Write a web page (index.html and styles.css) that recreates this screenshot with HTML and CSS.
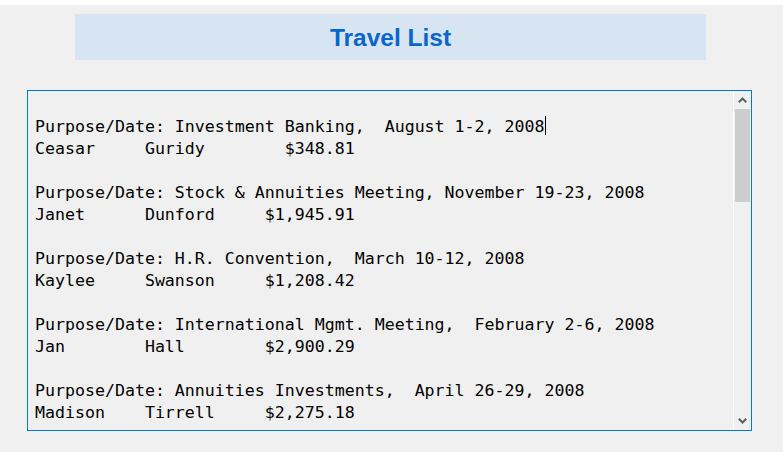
FILE: index.html
```html
<!DOCTYPE html>
<html>
<head>
<meta charset="utf-8">
<link rel="stylesheet" href="styles.css">
</head>
<body>
<div class="topstrip"></div>
<div class="page">
  <div class="banner"><h1 class="title">Travel List</h1></div>
  <div class="textbox">
    <div class="content"><div class="line">Purpose/Date: Investment Banking,  August 1-2, 2008<span class="caret"></span></div><div class="line">Ceasar     Guridy        $348.81</div><div class="line"> </div><div class="line">Purpose/Date: Stock &amp; Annuities Meeting, November 19-23, 2008</div><div class="line">Janet      Dunford     $1,945.91</div><div class="line"> </div><div class="line">Purpose/Date: H.R. Convention,  March 10-12, 2008</div><div class="line">Kaylee     Swanson     $1,208.42</div><div class="line"> </div><div class="line">Purpose/Date: International Mgmt. Meeting,  February 2-6, 2008</div><div class="line">Jan        Hall        $2,900.29</div><div class="line"> </div><div class="line">Purpose/Date: Annuities Investments,  April 26-29, 2008</div><div class="line">Madison    Tirrell     $2,275.18</div></div>
    <div class="scrollbar">
      <div class="arrow">
        <svg width="9" height="6" viewBox="0 0 9 6"><polyline points="0.8,5.2 4.5,1.5 8.2,5.2" fill="none" stroke="#606060" stroke-width="2"/></svg>
      </div>
      <div class="track"><div class="thumb"></div></div>
      <div class="arrow">
        <svg width="9" height="6" viewBox="0 0 9 6"><polyline points="0.8,0.8 4.5,4.5 8.2,0.8" fill="none" stroke="#606060" stroke-width="2"/></svg>
      </div>
    </div>
  </div>
</div>
</body>
</html>
```
FILE: styles.css
```css
html, body {
  margin: 0;
  padding: 0;
  background: #f0f0f0;
}
.topstrip {
  height: 5px;
  background: #ffffff;
}
.page {
  display: flex;
  flex-direction: column;
  padding-top: 9px;
}
.banner {
  margin-left: 75px;
  width: 631px;
  height: 46px;
  background: #d7e4f2;
  display: flex;
  align-items: center;
  justify-content: center;
}
.title {
  margin: 0;
  font-family: "Liberation Sans", Arial, sans-serif;
  font-weight: bold;
  font-size: 24.5px;
  color: #0866cc;
  line-height: 1;
  padding-top: 2px;
}
.textbox {
  margin-top: 30px;
  margin-left: 27px;
  width: 723px;
  height: 339px;
  border: 1px solid #0078d7;
  background: #f0f0f0;
  display: flex;
  overflow: hidden;
}
.content {
  flex: 1;
  padding: 25px 0 0 7px;
  font-family: "DejaVu Sans Mono", "Liberation Mono", monospace;
  font-size: 16.6px;
  color: #000000;
  white-space: pre;
}
.line {
  height: 22px;
  line-height: 22px;
}
.caret {
  display: inline-block;
  width: 1px;
  height: 19px;
  background: #000;
  vertical-align: -3px;
}
.scrollbar {
  width: 17px;
  border-left: 1px solid #ffffff;
  display: flex;
  flex-direction: column;
  background: #f0f0f0;
}
.arrow {
  height: 18px;
  display: flex;
  align-items: center;
  justify-content: center;
}
.track {
  flex: 1;
  display: flex;
  flex-direction: column;
  padding: 0 1px;
}
.thumb {
  height: 93px;
  background: #cdcdcd;
}
```
